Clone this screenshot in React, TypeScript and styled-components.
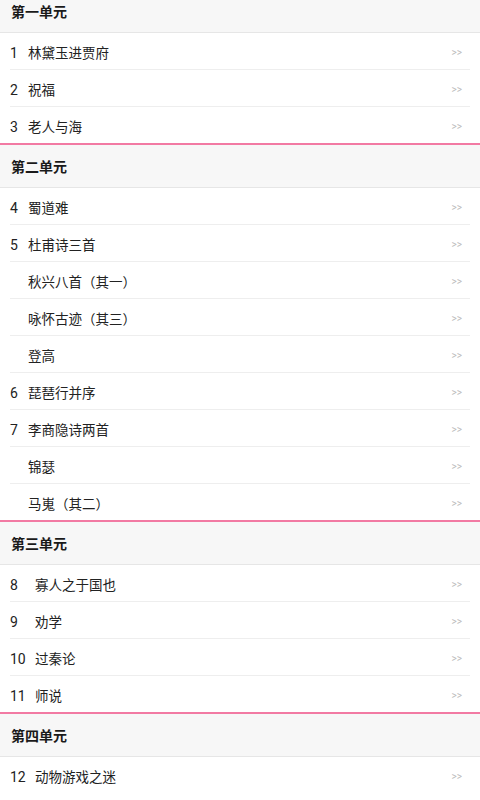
import styled, { createGlobalStyle } from 'styled-components'

const GlobalStyle = createGlobalStyle`
  html, body {
    margin: 0;
    padding: 0;
    background: #ffffff;
    overflow: hidden;
  }
  body {
    font-family: "Roboto", "Noto Sans CJK SC", sans-serif;
  }
`

type Lesson = { num?: string; title: string }
type Unit = { name: string; wide?: boolean; lessons: Lesson[] }

const units: Unit[] = [
  {
    name: '第一单元',
    lessons: [
      { num: '1', title: '林黛玉进贾府' },
      { num: '2', title: '祝福' },
      { num: '3', title: '老人与海' },
    ],
  },
  {
    name: '第二单元',
    lessons: [
      { num: '4', title: '蜀道难' },
      { num: '5', title: '杜甫诗三首' },
      { title: '秋兴八首（其一）' },
      { title: '咏怀古迹（其三）' },
      { title: '登高' },
      { num: '6', title: '琵琶行并序' },
      { num: '7', title: '李商隐诗两首' },
      { title: '锦瑟' },
      { title: '马嵬（其二）' },
    ],
  },
  {
    name: '第三单元',
    wide: true,
    lessons: [
      { num: '8', title: '寡人之于国也' },
      { num: '9', title: '劝学' },
      { num: '10', title: '过秦论' },
      { num: '11', title: '师说' },
    ],
  },
  {
    name: '第四单元',
    wide: true,
    lessons: [{ num: '12', title: '动物游戏之迷' }],
  },
]

const App = () => {
  return (
    <>
      <GlobalStyle />
      <PageST>
        {units.map((unit, i) => (
          <UnitST key={i} $last={i === units.length - 1}>
            <UnitHeaderST>{unit.name}</UnitHeaderST>
            <ListST>
              {unit.lessons.map((lesson, j) => (
                <LessonRowST key={j}>
                  <LessonLabelST>
                    <LessonNumST $wide={!!unit.wide}>{lesson.num ?? ''}</LessonNumST>
                    {lesson.title}
                  </LessonLabelST>
                  <ArrowST>&gt;&gt;</ArrowST>
                </LessonRowST>
              ))}
            </ListST>
          </UnitST>
        ))}
      </PageST>
    </>
  )
}

const PageST = styled.div`
  margin-top: -10px;
  width: 480px;
`

const UnitST = styled.section<{ $last: boolean }>`
  border-bottom: ${({ $last }) => ($last ? 'none' : '2px solid #f27aa3')};
`

const UnitHeaderST = styled.div`
  height: 42px;
  display: flex;
  align-items: center;
  padding-left: 11px;
  background: #f7f7f7;
  border-bottom: 1px solid #e6e6e6;
  font-size: 14px;
  font-weight: 700;
  color: #1a1a1a;
`

const ListST = styled.ul`
  list-style: none;
  margin: 0;
  padding: 0;
`

const LessonRowST = styled.li`
  box-sizing: border-box;
  height: 37px;
  padding-top: 3px;
  margin: 0 10px;
  display: flex;
  align-items: center;
  border-bottom: 1px solid #eeeeee;
  font-size: 13.5px;
  color: #222222;
  &:last-child {
    height: 36px;
    border-bottom: none;
  }
`

const LessonLabelST = styled.span`
  flex: 1;
  line-height: 20px;
`

const LessonNumST = styled.span<{ $wide: boolean }>`
  display: inline-block;
  width: ${({ $wide }) => ($wide ? '25px' : '18px')};
  font-size: 14px;
`

const ArrowST = styled.span`
  font-size: 10px;
  color: #bbbbbb;
  margin-right: 8px;
`

export default App
